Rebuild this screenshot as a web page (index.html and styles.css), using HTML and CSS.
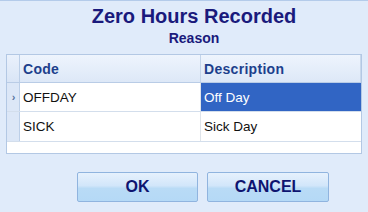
FILE: index.html
```html
<!DOCTYPE html>
<html>
<head>
<meta charset="utf-8">
<link rel="stylesheet" href="styles.css">
</head>
<body>
<div class="dialog">
  <div class="titles">
    <div class="title">Zero Hours Recorded</div>
    <div class="subtitle">Reason</div>
  </div>
  <div class="grid">
    <div class="row header">
      <div class="ind"></div>
      <div class="cell code">Code</div>
      <div class="cell desc">Description</div>
    </div>
    <div class="row r1">
      <div class="ind"><span class="chev">&#8250;</span></div>
      <div class="cell code">OFFDAY</div>
      <div class="cell desc selected">Off Day</div>
    </div>
    <div class="row r2">
      <div class="ind"></div>
      <div class="cell code">SICK</div>
      <div class="cell desc">Sick Day</div>
    </div>
    <div class="filler"></div>
  </div>
  <div class="buttons">
    <button class="btn ok">OK</button>
    <button class="btn cancel">CANCEL</button>
  </div>
</div>
</body>
</html>
```
FILE: styles.css
```css
html, body {
  margin: 0;
  padding: 0;
}
body {
  width: 368px;
  height: 212px;
  overflow: hidden;
  background: #e0ebfa;
  font-family: "Liberation Sans", Arial, sans-serif;
}
.dialog {
  border-top: 1px solid #b4cbea;
  height: 211px;
  display: flex;
  flex-direction: column;
}
.titles {
  padding: 4px 0 0 20px;
  text-align: center;
  color: #1a1a7c;
  font-weight: bold;
}
.title {
  font-size: 20px;
  line-height: 22px;
}
.subtitle {
  margin-top: 4px;
  font-size: 14px;
  line-height: 15px;
}
.grid {
  margin: 8px 6px 0 6px;
  border: 1px solid #b3c8e4;
  background: #fff;
  display: flex;
  flex-direction: column;
}
.row {
  display: flex;
  border-bottom: 1px solid #d3deec;
}
.row.header {
  height: 27px;
  border-bottom: 1px solid #b9cce6;
  background: linear-gradient(#eef4fd, #dde8f7);
}
.row.r1 { height: 28px; }
.row.r2 { height: 29px; }
.ind {
  width: 12px;
  flex: none;
  background: #dce7f7;
  border-right: 1px solid #bccfe8;
  display: flex;
  align-items: center;
  justify-content: center;
}
.header .ind {
  background: linear-gradient(#eaf1fc, #d9e5f6);
}
.chev {
  font-size: 11px;
  line-height: 11px;
  color: #56749f;
  font-weight: bold;
  margin-left: 1px;
}
.cell {
  display: flex;
  align-items: center;
  padding-left: 3px;
  font-size: 13.5px;
  color: #111;
}
.cell.code {
  width: 177px;
  flex: none;
  border-right: 1px solid #dfe4ea;
}
.cell.desc {
  flex: 1;
}
.header .cell {
  font-size: 14px;
  font-weight: bold;
  letter-spacing: 0.3px;
  color: #1d3f8c;
}
.header .cell.code {
  border-right: 1px solid #c3d4ea;
}
.header .cell.desc {
  border-right: 1px solid #c8d8ec;
}
.cell.selected {
  background: #3165c4;
  color: #fff;
}
.filler {
  height: 11px;
}
.buttons {
  margin-top: 18px;
  padding-left: 38px;
  display: flex;
  justify-content: center;
  gap: 9px;
}
.btn {
  height: 30px;
  border: 1px solid #90b4df;
  border-radius: 2px;
  background: linear-gradient(#e6f1fd 0%, #d2e6fa 45%, #b9dbf6 55%, #b5d9f6 100%);
  font-family: "Liberation Sans", Arial, sans-serif;
  font-weight: bold;
  font-size: 16px;
  color: #0e1470;
  padding: 0;
}
.btn.ok { width: 121px; }
.btn.cancel { width: 122px; }
```
